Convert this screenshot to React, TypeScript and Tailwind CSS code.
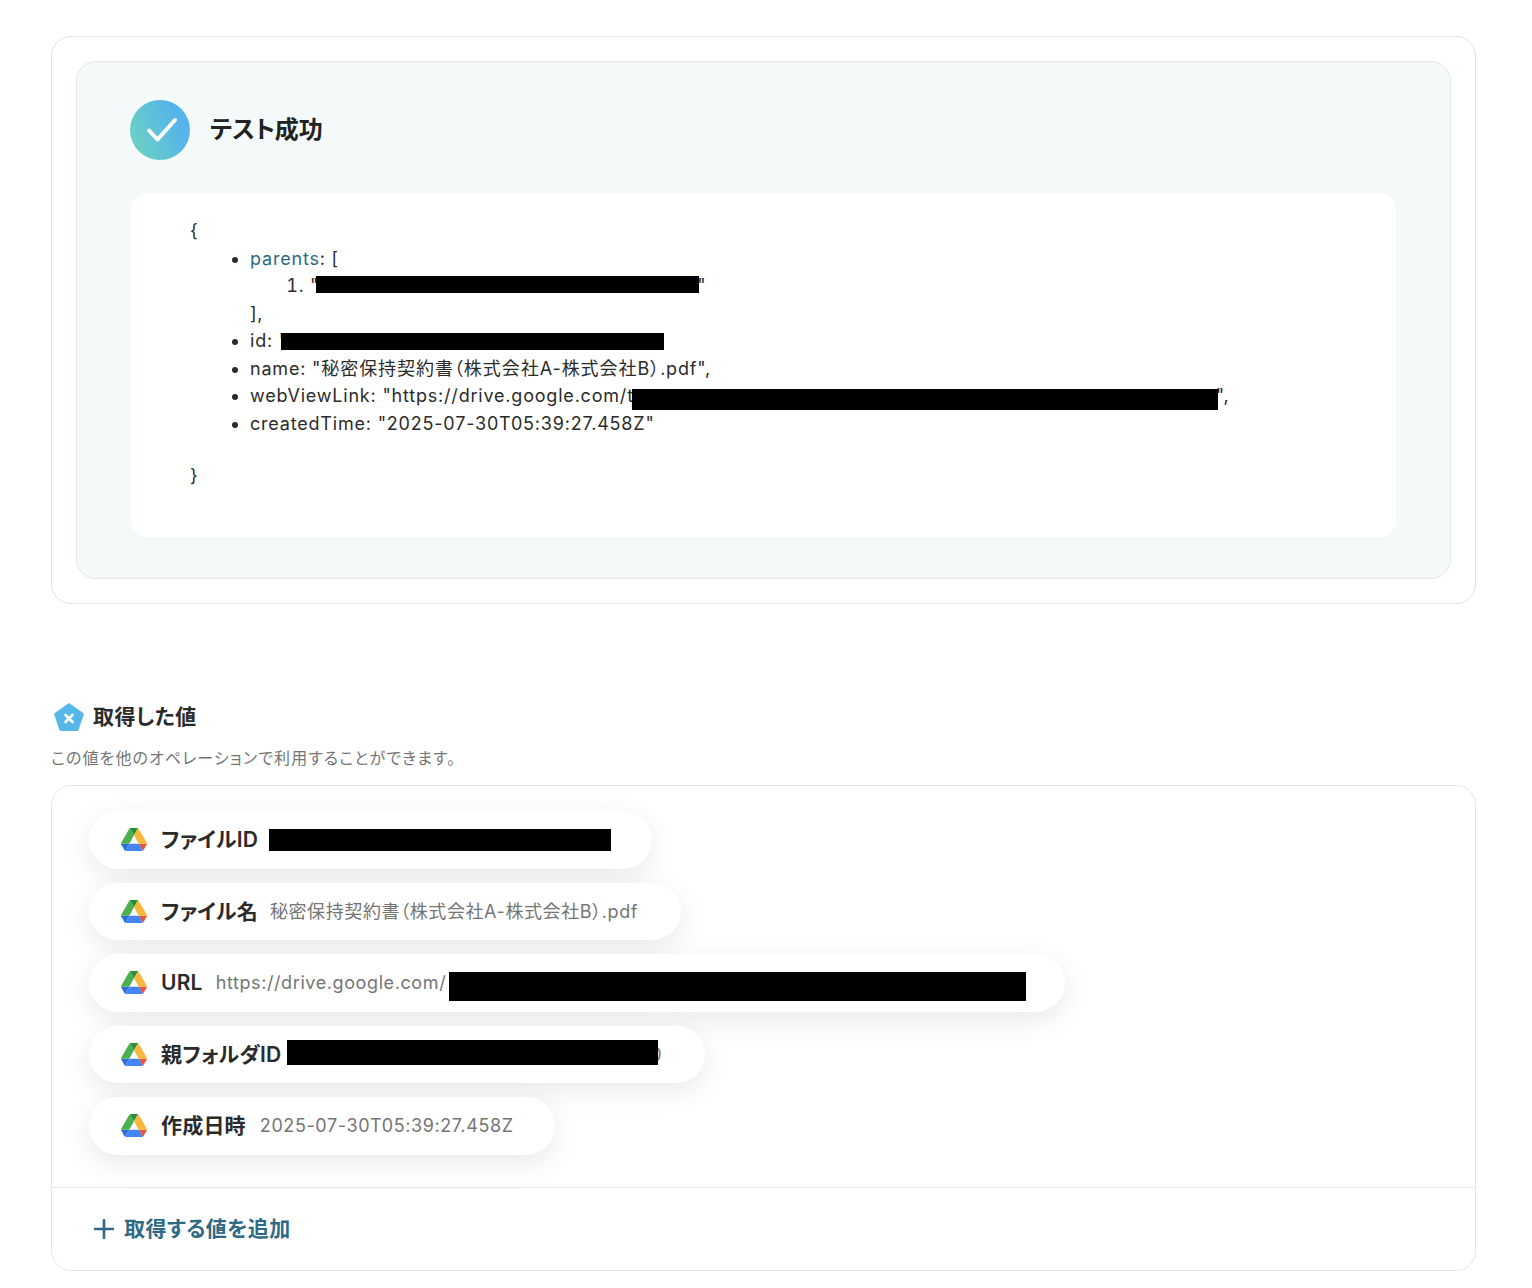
const font = "font-['Inter','Noto_Sans_CJK_JP',sans-serif] [font-feature-settings:'palt']";

function Drive() {
  return (
    <svg viewBox="0 0 87.3 78" className="h-[23px] w-[26px] shrink-0">
      <path d="m6.6 66.85 3.85 6.65c.8 1.4 1.95 2.5 3.3 3.3l13.75-23.8h-27.5c0 1.55.4 3.1 1.2 4.5z" fill="#2f6fd6" />
      <path d="m43.65 25-13.75-23.8c-1.35.8-2.5 1.9-3.3 3.3l-25.4 44a9.06 9.06 0 0 0 -1.2 4.5h27.5z" fill="#4caf50" />
      <path d="m73.55 76.8c1.35-.8 2.5-1.9 3.3-3.3l1.6-2.75 7.65-13.25c.8-1.4 1.2-2.95 1.2-4.5h-27.502l5.852 11.5z" fill="#e5573f" />
      <path d="m43.65 25 13.75-23.8c-1.35-.8-2.9-1.2-4.5-1.2h-18.5c-1.6 0-3.15.45-4.5 1.2z" fill="#2e8b3d" />
      <path d="m59.8 53h-32.3l-13.75 23.8c1.35.8 2.9 1.2 4.5 1.2h50.8c1.6 0 3.15-.45 4.5-1.2z" fill="#4285f4" />
      <path d="m73.4 26.5-12.7-22c-.8-1.4-1.95-2.5-3.3-3.3l-13.75 23.8 16.15 28h27.45c0-1.55-.4-3.1-1.2-4.5z" fill="#f6b73c" />
    </svg>
  );
}

function Pill({ label, width, children }: { label: string; width: string; children: React.ReactNode }) {
  return (
    <div className={`flex items-center rounded-full bg-white pl-[32px] h-[57.5px] shadow-[0_8px_28px_rgba(0,0,0,0.09)] ${width}`}>
      <Drive />
      <span className="ml-[14px] text-[21px] font-semibold tracking-[0.2px] text-[#2b2b2b] whitespace-nowrap">{label}</span>
      {children}
    </div>
  );
}

export default function App() {
  return (
    <div className={`${font} bg-white h-[1288px] pt-[36px] pl-[51px] pr-[56px] text-[#2b2b2b]`}>
      <section className="rounded-[20px] border border-[#e4e4e8] p-6 h-[568px]">
        <div className="h-[518px] rounded-[20px] border border-[#e4e6e8] bg-[#f4f9f9] pl-[54px] pr-[54px] pt-[38px]">
          <div className="flex items-center h-[60px] -ml-px">
            <div className="flex h-[60px] w-[60px] items-center justify-center rounded-full bg-[linear-gradient(65deg,#6fd6bc,#55b4ea_75%)]">
              <svg viewBox="0 0 32 26" className="ml-[3px] h-[26px] w-[32px]" fill="none" stroke="white" strokeWidth="4" strokeLinecap="round" strokeLinejoin="round">
                <path d="M3 13.5 L11.5 22.5 L29 3" />
              </svg>
            </div>
            <h2 className="ml-[20px] text-[24px] font-semibold text-[#222]">テスト成功</h2>
          </div>
          <div className="mt-[33px] h-[344px] rounded-[16px] bg-white pl-[59px] pt-[24px] text-[18px] leading-[27.5px] tracking-[0.8px] text-[#2b2b2b]">
            <div>{"{"}</div>
            <ul className="list-disc pl-[60px]">
              <li>
                <span className="text-[#2e6a85]">parents</span>: [
                <ol className="list-decimal pl-[60px]">
                  <li>
                    "<span className="inline-block h-[17px] w-[383px] bg-black align-[-1px] -ml-[3px] mr-[-2px]"></span>"
                  </li>
                </ol>
                ],
              </li>
              <li>
                id: "<span className="relative inline-block h-[17px] w-[383px] bg-black align-[-3px] -ml-[7px]"></span>
              </li>
              <li>
                name: "<span className="tracking-[0.95px]">秘密保持契約書（株式会社A-株式会社B）</span>.pdf",
              </li>
              <li>
                webViewLink: "https://drive.google.com/t<span className="relative inline-block h-[21px] w-[586px] bg-black align-[-8px] -ml-[2px] mr-[-2px]"></span>",
              </li>
              <li>createdTime: "2025-07-30T05:39:27.458Z"</li>
            </ul>
            <div className="mt-[24px]">{"}"}</div>
          </div>
        </div>
      </section>

      <div className="mt-[97px] flex items-center h-[32px] pl-[2px]">
        <svg viewBox="0 0 32 30" className="h-[30px] w-[32px] shrink-0">
          <path d="M16 1 L30.5 11.2 Q31 11.8 30.8 12.6 L25.5 28 Q25 29 24 29 L8 29 Q7 29 6.5 28 L1.2 12.6 Q1 11.8 1.5 11.2 Z" fill="#55b8e8" />
          <path d="M12.5 13 L19.5 20 M19.5 13 L12.5 20" stroke="white" strokeWidth="2.6" strokeLinecap="round" />
        </svg>
        <h3 className="ml-[8px] text-[21px] font-semibold tracking-[0.4px] text-[#2b2b2b]">取得した値</h3>
      </div>
      <p className="mt-[14px] h-[22px] text-[16px] leading-[22px] tracking-[1.1px] text-[#757575]">この値を他のオペレーションで利用することができます。</p>

      <section className="mt-[16px] h-[486px] rounded-[20px] border border-[#e6e6e8] overflow-hidden">
        <div className="h-[402px] border-b border-[#e4e4e4] pl-[37px] pt-[25px] flex flex-col gap-[14px]">
          <Pill label="ファイルID" width="w-[563px]">
            <span className="ml-[11px] inline-block h-[22px] w-[342px] bg-black"></span>
          </Pill>
          <Pill label="ファイル名" width="w-[592px]">
            <span className="ml-[12px] text-[18px] tracking-[0.6px] text-[#757575] whitespace-nowrap">秘密保持契約書（株式会社A-株式会社B）.pdf</span>
          </Pill>
          <Pill label="URL" width="w-[976px]">
            <span className="ml-[13px] text-[18px] tracking-[0.6px] text-[#757575] whitespace-nowrap">https://drive.google.com/</span>
            <span className="ml-[3px] mt-[7px] inline-block h-[29px] w-[577px] bg-black"></span>
          </Pill>
          <Pill label="親フォルダID" width="w-[616px]">
            <span className="relative z-10 ml-[6px] -mt-[3px] inline-block h-[25px] w-[371px] bg-black"></span>
            <span className="-ml-[8px] text-[18px] text-[#757575]">0</span>
          </Pill>
          <Pill label="作成日時" width="w-[466px]">
            <span className="ml-[14px] text-[18px] tracking-[0.6px] text-[#757575] whitespace-nowrap">2025-07-30T05:39:27.458Z</span>
          </Pill>
        </div>
        <div className="flex items-center h-[82px] pl-[42px]">
          <svg viewBox="0 0 20 20" className="h-[20px] w-[20px]" stroke="#2e6a85" strokeWidth="2.6" strokeLinecap="round">
            <path d="M10 1 V19 M1 10 H19" />
          </svg>
          <span className="ml-[10px] text-[21px] font-semibold tracking-[0.4px] text-[#2e6a85]">取得する値を追加</span>
        </div>
      </section>
    </div>
  );
}
